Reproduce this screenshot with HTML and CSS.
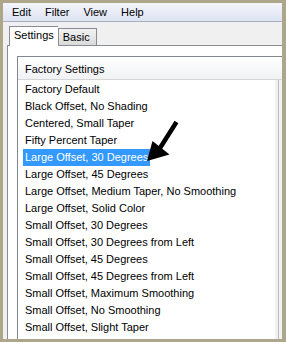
FILE: index.html
```html
<!DOCTYPE html>
<html lang="en">
  <head>
    <meta charset="UTF-8" />
    <meta name="viewport" content="width=device-width, initial-scale=1.0" />
    <title>Preset Settings</title>
    <link rel="stylesheet" href="styles.css">
  </head>
  <body>
    <div class="window">
      <div class="menubar">
        <span class="menu-item">Edit</span>
        <span class="menu-item">Filter</span>
        <span class="menu-item">View</span>
        <span class="menu-item">Help</span>
      </div>
      <div class="tabs">
        <div class="tab active">Settings</div>
        <div class="tab">Basic</div>
      </div>
      <div class="panel">
        <div class="listbox">
          <div class="list-head">Factory Settings</div>
          <div class="list-body">
            <ul class="items">
              <li><span>Factory Default</span></li>
              <li><span>Black Offset, No Shading</span></li>
              <li><span>Centered, Small Taper</span></li>
              <li><span>Fifty Percent Taper</span></li>
              <li class="selected"><span>Large Offset, 30 Degrees</span></li>
              <li><span>Large Offset, 45 Degrees</span></li>
              <li><span>Large Offset, Medium Taper, No Smoothing</span></li>
              <li><span>Large Offset, Solid Color</span></li>
              <li><span>Small Offset, 30 Degrees</span></li>
              <li><span>Small Offset, 30 Degrees from Left</span></li>
              <li><span>Small Offset, 45 Degrees</span></li>
              <li><span>Small Offset, 45 Degrees from Left</span></li>
              <li><span>Small Offset, Maximum Smoothing</span></li>
              <li><span>Small Offset, No Smoothing</span></li>
              <li><span>Small Offset, Slight Taper</span></li>
            </ul>
            <div class="scrollbar"><div class="thumb"></div></div>
          </div>
          <!-- pointer arrow drawn over the list -->
          <svg class="arrow" width="36" height="50" viewBox="0 0 36 50">
            <line x1="31.5" y1="7" x2="15" y2="33" stroke="#000" stroke-width="4.5" />
            <polygon points="2,46 7.5,26 24.5,39.5" fill="#000" />
          </svg>
        </div>
      </div>
    </div>
  </body>
</html>
```

FILE: styles.css
```css
body {
  margin: 0;
  width: 286px;
  height: 342px;
  overflow: hidden;
  background-color: #aea68a;
  font-family: "Liberation Sans", Arial, sans-serif;
  font-size: 11px;
  color: #000;
}
.window {
  margin: 3px 4px 0 3px;
  height: 336px;
  background-color: #f0f0f0;
  overflow: hidden;
  display: flex;
  flex-direction: column;
}
.menubar {
  height: 18px;
  display: flex;
  align-items: center;
  padding-left: 2px;
  background: linear-gradient(#f3f5fb, #dde3f2);
  border-bottom: 1px solid #a9afbd;
}
.menu-item {
  padding: 0 7px;
  line-height: 13px;
}
.tabs {
  height: 23px;
  display: flex;
  align-items: flex-end;
  padding-left: 6px;
}
.tab {
  border: 1px solid #898c95;
  border-bottom: none;
  line-height: 13px;
  padding: 2px 6px 1px 4px;
  background: linear-gradient(#f3f3f3, #dadada);
}
.tab.active {
  position: relative;
  z-index: 1;
  margin-bottom: -1px;
  padding: 2px 4px 4px 4px;
  background: #fff;
  border-right: none;
}
.panel {
  flex: 1;
  margin-left: 4px;
  background-color: #fff;
  border-top: 1px solid #898c95;
  border-left: 1px solid #898c95;
  padding: 10px 0 0 9px;
  overflow: hidden;
}
.listbox {
  position: relative;
  height: 100%;
  border-top: 1px solid #828790;
  border-left: 1px solid #828790;
  display: flex;
  flex-direction: column;
}
.list-head {
  height: 16px;
  padding: 6px 0 0 7px;
  line-height: 13px;
  background: linear-gradient(#ffffff, #f1f2f5);
  border-bottom: 1px solid #d5d5d5;
}
.list-body {
  flex: 1;
  display: flex;
}
.items {
  flex: 1;
  list-style: none;
  margin: 0;
  padding: 1px 0 0 5px;
  white-space: nowrap;
  overflow: hidden;
}
.items li {
  height: 17px;
  line-height: 17px;
}
.items li span {
  display: inline-block;
  padding: 0 2px;
}
.items li.selected span {
  background-color: #3399ff;
  color: #fff;
}
.scrollbar {
  width: 7px;
  background: linear-gradient(to right, #f4f4f4, #e4e4e4);
}
.thumb {
  margin-left: 3px;
  height: 100%;
  border-left: 1px solid #bdbdbd;
  background: #f2f2f2;
}
.arrow {
  position: absolute;
  left: 127px;
  top: 58px;
}
```
